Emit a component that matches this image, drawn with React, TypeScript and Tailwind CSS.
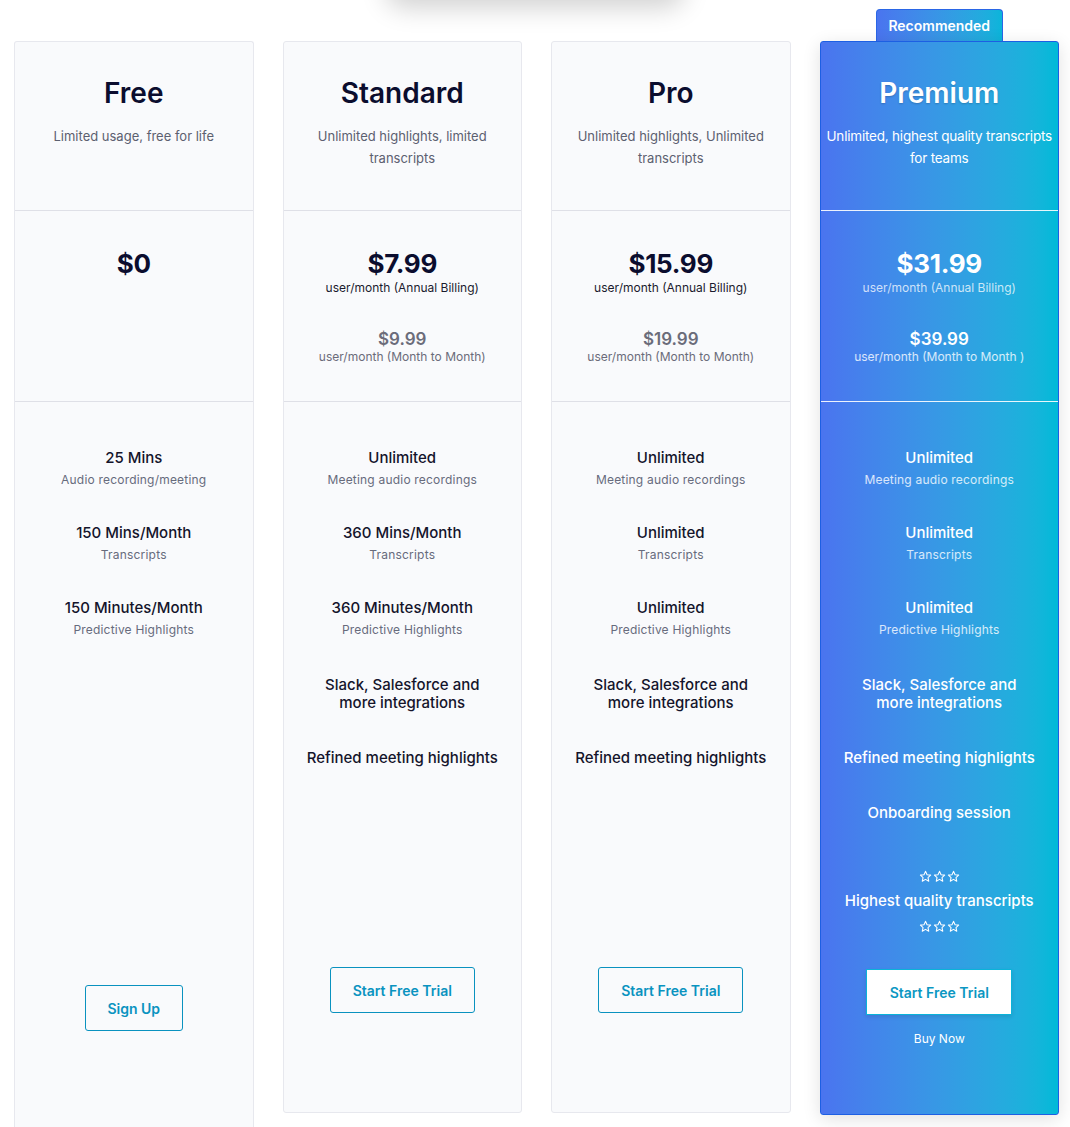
import React from 'react';

type Feature = { title: string; sub?: string; wrap?: boolean };

type Plan = {
  name: string;
  desc: string;
  price: string;
  annual?: string;
  monthly?: string;
  monthlyNote?: string;
  features: Feature[];
  cta: string;
};

const slack: Feature = { title: 'Slack, Salesforce and more integrations', wrap: true };

const plans: Plan[] = [
  {
    name: 'Free',
    desc: 'Limited usage, free for life',
    price: '$0',
    features: [
      { title: '25 Mins', sub: 'Audio recording/meeting' },
      { title: '150 Mins/Month', sub: 'Transcripts' },
      { title: '150 Minutes/Month', sub: 'Predictive Highlights' },
    ],
    cta: 'Sign Up',
  },
  {
    name: 'Standard',
    desc: 'Unlimited highlights, limited transcripts',
    price: '$7.99',
    annual: 'user/month (Annual Billing)',
    monthly: '$9.99',
    monthlyNote: 'user/month (Month to Month)',
    features: [
      { title: 'Unlimited', sub: 'Meeting audio recordings' },
      { title: '360 Mins/Month', sub: 'Transcripts' },
      { title: '360 Minutes/Month', sub: 'Predictive Highlights' },
      slack,
      { title: 'Refined meeting highlights' },
    ],
    cta: 'Start Free Trial',
  },
  {
    name: 'Pro',
    desc: 'Unlimited highlights, Unlimited transcripts',
    price: '$15.99',
    annual: 'user/month (Annual Billing)',
    monthly: '$19.99',
    monthlyNote: 'user/month (Month to Month)',
    features: [
      { title: 'Unlimited', sub: 'Meeting audio recordings' },
      { title: 'Unlimited', sub: 'Transcripts' },
      { title: 'Unlimited', sub: 'Predictive Highlights' },
      slack,
      { title: 'Refined meeting highlights' },
    ],
    cta: 'Start Free Trial',
  },
];

const font = { fontFamily: 'Inter, "Noto Sans", sans-serif' };

function FeatureItem({ f, dark }: { f: Feature; dark?: boolean }) {
  return (
    <div className={`flex flex-col items-center px-2 text-center ${f.sub ? '' : 'mt-[2px]'}`}>
      <div className={`text-[15px] font-medium leading-[18px] ${dark ? 'text-white' : 'text-[#14142b]'}`}>
        {f.wrap ? (
          <>
            Slack, Salesforce and
            <br />
            more integrations
          </>
        ) : (
          f.title
        )}
      </div>
      {f.sub && (
        <div
          className={`mt-[4px] text-[12px] leading-[18px] tracking-[0.2px] ${
            dark ? 'text-white/80' : 'text-[#676b7c]'
          }`}
        >
          {f.sub}
        </div>
      )}
    </div>
  );
}

function PlanCard({ plan, first }: { plan: Plan; first?: boolean }) {
  return (
    <div
      className={`flex flex-col rounded-[3px] border border-[#e7e8ee] bg-[#f9fafc] ${
        first ? 'h-[1086px] rounded-b-none border-b-0' : 'h-[1072px]'
      }`}
    >
      <div className="flex h-[169px] flex-col items-center border-b border-[#dfe0e7] px-6 pt-[33px] text-center">
        <div className="text-[28px] font-semibold leading-[36px] text-[#0b0d2e]">{plan.name}</div>
        <div className="mt-[14px] text-[13px] leading-[22px] text-[#5c6070]">{plan.desc}</div>
      </div>
      <div className="flex h-[191px] flex-col items-center border-b border-[#dfe0e7] pt-[37px] text-center">
        <div className="text-[26px] font-bold leading-[32px] tracking-[-0.3px] text-[#0b0d2e]">{plan.price}</div>
        {plan.annual && <div className="text-[12px] leading-[16px] text-[#1b1b2e]">{plan.annual}</div>}
        {plan.monthly && (
          <>
            <div className="mt-[33px] text-[17px] font-semibold leading-[20px] text-[#6b6c7a]">{plan.monthly}</div>
            <div className="text-[12px] leading-[16px] text-[#6b6c7a]">{plan.monthlyNote}</div>
          </>
        )}
      </div>
      <div className="flex flex-1 flex-col items-center pt-[47px]">
        <div className="flex flex-col gap-[35px]">
          {plan.features.map((f, i) => (
            <FeatureItem key={i} f={f} />
          ))}
        </div>
        <button
          className={`mt-auto h-[46px] rounded-[3px] border-[1.5px] border-[#0a92bf] text-[14px] font-semibold text-[#0a93c0] ${
            first ? 'mb-[96px] w-[98px]' : 'mb-[99px] w-[145px]'
          }`}
        >
          {plan.cta}
        </button>
      </div>
    </div>
  );
}

function Stars() {
  return (
    <div className="flex h-[16px] items-center gap-[1px]">
      {[0, 1, 2].map((i) => (
        <svg key={i} width="13" height="13" viewBox="0 0 24 24" fill="none" stroke="white" strokeWidth="2" strokeLinejoin="round">
          <path d="M12 2.5l2.9 6.2 6.6.7-4.9 4.6 1.4 6.6L12 17.3l-5.9 3.3 1.4-6.6-4.9-4.6 6.6-.7z" />
        </svg>
      ))}
    </div>
  );
}

function PremiumCard() {
  const features: Feature[] = [
    { title: 'Unlimited', sub: 'Meeting audio recordings' },
    { title: 'Unlimited', sub: 'Transcripts' },
    { title: 'Unlimited', sub: 'Predictive Highlights' },
    slack,
    { title: 'Refined meeting highlights' },
    { title: 'Onboarding session' },
  ];
  return (
    <div className="flex h-[1074px] flex-col rounded-[3px] border border-[#1d5fe3] bg-gradient-to-r from-[#4a74ef] to-[#00bad8] shadow-[0_4px_18px_rgba(0,0,0,0.12)]">
      <div className="flex h-[169px] flex-col items-center border-b border-white/90 pt-[33px] text-center">
        <div className="text-[28px] font-semibold leading-[36px] text-white [text-shadow:0_1px_2px_rgba(0,0,0,0.2)]">
          Premium
        </div>
        <div className="mt-[14px] text-[13.5px] leading-[22px] tracking-[-0.2px] text-white">
          Unlimited, highest quality transcripts
          <br />
          for teams
        </div>
      </div>
      <div className="flex h-[191px] flex-col items-center border-b border-white/90 pt-[37px] text-center">
        <div className="text-[26px] font-bold leading-[32px] tracking-[-0.3px] text-white">$31.99</div>
        <div className="text-[12px] leading-[16px] text-white/75">user/month (Annual Billing)</div>
        <div className="mt-[33px] text-[17px] font-semibold leading-[20px] text-white">$39.99</div>
        <div className="text-[12px] leading-[16px] text-white/80">user/month (Month to Month )</div>
      </div>
      <div className="flex flex-1 flex-col items-center pt-[47px]">
        <div className="flex flex-col gap-[35px]">
          {features.map((f, i) => (
            <FeatureItem key={i} f={f} dark />
          ))}
        </div>
        <div className="mt-[46px] flex flex-col items-center gap-[5px]">
          <Stars />
          <div className="text-[15px] font-medium leading-[24px] text-white">Highest quality transcripts</div>
          <Stars />
        </div>
        <button className="mt-[35px] h-[46px] w-[146px] border-[1.5px] border-[#0bb3d9] bg-white text-[14px] font-semibold text-[#0b97c2] shadow-[0_2px_4px_rgba(0,0,0,0.1)]">
          Start Free Trial
        </button>
        <div className="mt-[16px] text-[12px] leading-[16px] text-white">Buy Now</div>
      </div>
    </div>
  );
}

export default function App() {
  return (
    <div className="h-[1127px] overflow-hidden bg-white" style={font}>
      <div className="mx-auto -mt-10 h-10 w-[300px] rounded-full shadow-[0_8px_26px_rgba(0,0,0,0.18)]" />
      <div className="grid grid-cols-4 gap-[29px] pl-[14px] pr-[11px] pt-[9px]">
        {plans.map((p, i) => (
          <div key={p.name} className="flex flex-col">
            <div className="h-[32px]" />
            <PlanCard plan={p} first={i === 0} />
          </div>
        ))}
        <div className="flex flex-col items-center">
          <div className="flex h-[32px] w-[127px] items-center justify-center rounded-t-[4px] border border-b-0 border-[#2a66e6] bg-gradient-to-r from-[#4a74ef] to-[#0ab5da] text-[14px] font-semibold text-white">
            Recommended
          </div>
          <div className="w-full">
            <PremiumCard />
          </div>
        </div>
      </div>
    </div>
  );
}
